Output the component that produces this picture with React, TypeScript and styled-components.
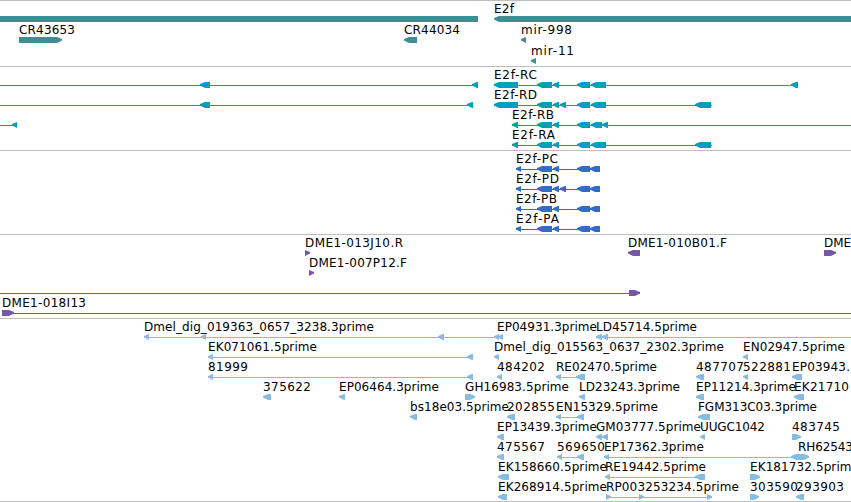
import React from "react";
import styled, { createGlobalStyle } from "styled-components";

// Types
type Strand = "left" | "right" | "none";

// [start, end, strand], strand defaults to the reverse one
type Exon = [number, number, Strand?];

interface Feature {
  exons: Exon[];
  line?: [number, number];
}

type LabelData = [string, number, number?];

interface RowData {
  labels?: LabelData[];
  features: Feature[];
}

interface TrackData {
  name: string;
  color: string;
  rowHeight: number;
  bottom: number;
  rows: RowData[];
}

// Styles
const GlobalStyle = createGlobalStyle`
  body {
    margin: 0;
    background: #ffffff;
    overflow: hidden;
  }
`;

const Browser = styled.main`
  display: flex;
  flex-direction: column;
  width: 851px;
  height: 502px;
  box-sizing: border-box;
  overflow: hidden;
  background: #ffffff;
  border-bottom: 1px solid #bebebe;
`;

const TrackPanel = styled.section<{ $color: string; $bottom: number }>`
  display: flex;
  flex-direction: column;
  border-top: 1px solid #bebebe;
  padding: 2px 0 ${(props) => props.$bottom}px;
  color: ${(props) => props.$color};
`;

const TrackRow = styled.svg<{ $height: number }>`
  display: block;
  flex: none;
  width: 851px;
  height: ${(props) => props.$height}px;
  overflow: visible;
`;

const Label = styled.text`
  font-family: "DejaVu Sans", sans-serif;
  font-size: 12px;
  fill: #000000;
  white-space: pre;
`;

const Connector = styled.rect`
  fill: currentColor;
  shape-rendering: crispEdges;
`;

const Block = styled.polygon`
  fill: currentColor;
`;

// Data
const RNA_CORE: Exon[] = [
  [537, 552],
  [553, 559],
  [577, 590],
];

const CDS: Exon[] = [[516, 521], ...RNA_CORE, [590, 600]];

const TRACKS: TrackData[] = [
  {
    name: "genes",
    color: "#408e94",
    rowHeight: 21,
    bottom: 0,
    rows: [
      {
        labels: [["E2f", 494, 20]],
        features: [{ exons: [[0, 478, "none"]] }, { exons: [[494, 851]] }],
      },
      {
        labels: [
          ["CR43653", 19, 56],
          ["CR44034", 404, 56],
          ["mir-998", 521, 51],
        ],
        features: [
          { exons: [[19, 62, "right"]] },
          { exons: [[404, 417]] },
          { exons: [[521, 526]] },
        ],
      },
      {
        labels: [["mir-11", 531, 43]],
        features: [{ exons: [[531, 536]] }],
      },
    ],
  },
  {
    name: "transcripts",
    color: "#009fc0",
    rowHeight: 20,
    bottom: 1,
    rows: [
      {
        labels: [["E2f-RC", 494, 43]],
        features: [
          { line: [0, 478], exons: [[200, 210], [472, 478]] },
          {
            line: [494, 798],
            exons: [[494, 518], ...RNA_CORE, [591, 606], [791, 798]],
          },
        ],
      },
      {
        labels: [["E2f-RD", 494, 43]],
        features: [
          { line: [0, 473], exons: [[200, 210], [467, 473]] },
          {
            line: [494, 712],
            exons: [[494, 518], ...RNA_CORE, [560, 566], [591, 606], [695, 711]],
          },
        ],
      },
      {
        labels: [["E2f-RB", 512, 42]],
        features: [
          { line: [0, 17], exons: [[12, 17]] },
          {
            line: [512, 851],
            exons: [[512, 518], ...RNA_CORE, [591, 602], [602, 608]],
          },
        ],
      },
      {
        labels: [["E2f-RA", 512, 43]],
        features: [
          {
            line: [512, 712],
            exons: [[512, 518], ...RNA_CORE, [591, 606], [695, 711]],
          },
        ],
      },
    ],
  },
  {
    name: "coding",
    color: "#316ccd",
    rowHeight: 20,
    bottom: 1,
    rows: [
      {
        labels: [["E2f-PC", 516, 42]],
        features: [{ line: [516, 600], exons: CDS }],
      },
      {
        labels: [["E2f-PD", 516, 43]],
        features: [{ line: [516, 600], exons: [...CDS, [560, 566]] }],
      },
      {
        labels: [["E2f-PB", 516, 41]],
        features: [{ line: [516, 600], exons: CDS }],
      },
      {
        labels: [["E2f-PA", 516, 43]],
        features: [{ line: [516, 600], exons: CDS }],
      },
    ],
  },
  {
    name: "clones",
    color: "#7458a7",
    rowHeight: 20,
    bottom: 1,
    rows: [
      {
        labels: [
          ["DME1-013J10.R", 305, 98],
          ["DME1-010B01.F", 628, 99],
          ["DME", 824, 27],
        ],
        features: [
          { exons: [[305, 310, "right"]] },
          { exons: [[628, 640]] },
          { exons: [[824, 836, "right"]] },
        ],
      },
      {
        labels: [["DME1-007P12.F", 309, 98]],
        features: [{ exons: [[309, 314, "right"]] }],
      },
      {
        features: [{ line: [0, 640], exons: [[629, 640, "right"]] }],
      },
      {
        labels: [["DME1-018I13", 2, 84]],
        features: [{ line: [2, 851], exons: [[2, 14, "right"]] }],
      },
    ],
  },
  {
    name: "ests",
    color: "#88bcdf",
    rowHeight: 20,
    bottom: 0,
    rows: [
      {
        labels: [
          ["Dmel_dig_019363_0657_3238.3prime", 144, 230],
          ["EP04931.3prime", 497, 100],
          ["LD45714.5prime", 596, 101],
        ],
        features: [
          {
            line: [144, 503],
            exons: [[144, 149], [201, 206], [438, 444], [494, 499], [498, 503]],
          },
          { line: [596, 851], exons: [[596, 602], [602, 608]] },
        ],
      },
      {
        labels: [
          ["EK071061.5prime", 208, 109],
          ["Dmel_dig_015563_0637_2302.3prime", 494, 230],
          ["EN02947.5prime", 743, 102],
        ],
        features: [
          { line: [208, 473], exons: [[208, 213], [467, 473]] },
          { exons: [[494, 499]] },
          { exons: [[743, 748]] },
        ],
      },
      {
        labels: [
          ["81999", 208, 40],
          ["484202", 497, 48],
          ["RE02470.5prime", 556, 101],
          ["487707", 696, 48],
          ["522881", 743, 48],
          ["EP03943.", 792, 58],
        ],
        features: [
          { line: [208, 473], exons: [[208, 213], [467, 473]] },
          { exons: [[497, 502]] },
          { line: [556, 585], exons: [[556, 561], [576, 585]] },
          { exons: [[696, 704]] },
          { exons: [[743, 748]] },
          { exons: [[792, 802]] },
        ],
      },
      {
        labels: [
          ["375622", 263, 48],
          ["EP06464.3prime", 339, 100],
          ["GH16983.5prime", 465, 104],
          ["LD23243.3prime", 579, 101],
          ["EP11214.3prime", 696, 100],
          ["EK21710", 794, 55],
        ],
        features: [
          { exons: [[263, 271]] },
          { exons: [[339, 345]] },
          { exons: [[465, 475, "right"]] },
          { exons: [[579, 585]] },
          { exons: [[696, 704]] },
          { exons: [[794, 804]] },
        ],
      },
      {
        labels: [
          ["bs18e03.5prime", 410, 99],
          ["202855", 507, 48],
          ["EN15329.5prime", 556, 102],
          ["FGM313C03.3prime", 698, 119],
        ],
        features: [
          { exons: [[410, 417]] },
          { exons: [[507, 515]] },
          { line: [556, 584], exons: [[556, 561], [577, 584]] },
          { exons: [[698, 710]] },
        ],
      },
      {
        labels: [
          ["EP13439.3prime", 497, 100],
          ["GM03777.5prime", 596, 105],
          ["UUGC1042", 700, 65],
          ["483745", 792, 48],
        ],
        features: [
          { exons: [[497, 504]] },
          { exons: [[596, 602], [602, 608]] },
          { exons: [[700, 705]] },
          { exons: [[792, 801, "right"]] },
        ],
      },
      {
        labels: [
          ["475567", 497, 48],
          ["569650", 557, 48],
          ["EP17362.3prime", 604, 100],
          ["RH62543", 798, 55],
        ],
        features: [
          { exons: [[497, 504]] },
          { line: [557, 584], exons: [[557, 562], [577, 584]] },
          { line: [604, 801], exons: [[604, 609], [791, 801]] },
          { exons: [[798, 809, "right"]] },
        ],
      },
      {
        labels: [
          ["EK158660.5prime", 498, 109],
          ["RE19442.5prime", 605, 101],
          ["EK181732.5prime", 750, 109],
        ],
        features: [
          { exons: [[498, 509]] },
          { line: [605, 705], exons: [[605, 610], [695, 705]] },
          { exons: [[750, 760, "right"]] },
        ],
      },
      {
        labels: [
          ["EK268914.5prime", 498, 109],
          ["RP003253234.5prime", 606, 133],
          ["303590", 750, 48],
          ["293903", 796, 48],
        ],
        features: [
          { exons: [[498, 507]] },
          {
            line: [606, 712],
            exons: [[606, 611, "right"], [639, 644, "right"], [707, 712, "right"]],
          },
          { exons: [[750, 759, "right"]] },
          { exons: [[796, 804]] },
        ],
      },
    ],
  },
];

const LABEL_BASELINE = 10;
const BLOCK_TOP = 13;
const BLOCK_HEIGHT = 6;

// Outline of an exon, with a blunt pointed head on its strand side
const blockPoints = ([start, end, strand = "left"]: Exon): string => {
  const top = BLOCK_TOP;
  const bottom = top + BLOCK_HEIGHT;
  const tipTop = top + 2;
  const tipBottom = top + 3.5;
  const head = Math.min(5, end - start);

  if (strand === "left") {
    return `${start},${tipBottom} ${start},${tipTop} ${start + head},${top} ${end},${top} ${end},${bottom} ${start + head},${bottom}`;
  }
  if (strand === "right") {
    return `${start},${top} ${end - head},${top} ${end},${tipTop} ${end},${tipBottom} ${end - head},${bottom} ${start},${bottom}`;
  }
  return `${start},${top} ${end},${top} ${end},${bottom} ${start},${bottom}`;
};

// Components
const FeatureGlyph: React.FC<{ feature: Feature }> = ({ feature }) => (
  <g>
    {feature.line && (
      <Connector
        x={feature.line[0]}
        y={BLOCK_TOP + 3}
        width={feature.line[1] - feature.line[0]}
        height={1}
      />
    )}
    {feature.exons.map((exon) => (
      <Block key={exon[0]} points={blockPoints(exon)} />
    ))}
  </g>
);

const Track: React.FC<{ track: TrackData }> = ({ track }) => (
  <TrackPanel $color={track.color} $bottom={track.bottom}>
    {track.rows.map((row, index) => (
      <TrackRow key={index} $height={track.rowHeight}>
        {row.features.map((feature, i) => (
          <FeatureGlyph key={i} feature={feature} />
        ))}
        {row.labels?.map(([text, start, width]) => (
          <Label key={text} x={start} y={LABEL_BASELINE} textLength={width}>
            {text}
          </Label>
        ))}
      </TrackRow>
    ))}
  </TrackPanel>
);

const App: React.FC = () => {
  return (
    <>
      <GlobalStyle />
      <Browser>
        {TRACKS.map((track) => (
          <Track key={track.name} track={track} />
        ))}
      </Browser>
    </>
  );
};

export default App;
